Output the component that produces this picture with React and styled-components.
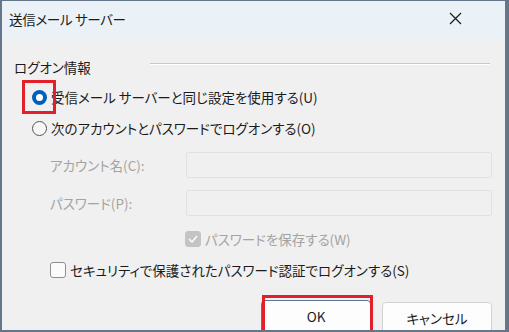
import React from "react";
import styled, { createGlobalStyle } from "styled-components";

const Global = createGlobalStyle`
  html, body { margin: 0; padding: 0; background: #f0f0f0; }
  body { font-family: "Noto Sans CJK JP", "Noto Sans", sans-serif; }
  * { box-sizing: border-box; }
`;

const Window = styled.div`
  position: relative;
  width: 509px;
  height: 332px;
  border-style: solid;
  border-color: #66768a;
  border-width: 1px 4px 2px 2px;
  display: flex;
  flex-direction: column;
  overflow: hidden;
  font-family: "Noto Sans CJK JP", "Noto Sans", sans-serif;
  font-feature-settings: "palt";
  font-size: 13.5px;
  color: #1b1b1b;
`;

const TitleBar = styled.div`
  height: 37px;
  flex: none;
  display: flex;
  align-items: center;
  justify-content: space-between;
  background: #eaf2f7;
  padding: 0 43px 0 7px;
`;

const Title = styled.span`
  font-size: 13.5px;
  letter-spacing: -0.3px;
  line-height: 20px;
  margin-top: -2px;
`;

const Close = styled.svg`
  width: 13px;
  height: 13px;
  margin-top: -2px;
`;

const Body = styled.div`
  flex: 1;
  background: #f0f0f0;
  display: flex;
  flex-direction: column;
  padding: 20px 13px 0 12px;
  overflow: hidden;
`;

const GroupHeader = styled.div`
  display: flex;
  align-items: flex-start;
  height: 18px;
  line-height: 18px;
`;

const GroupLine = styled.div`
  margin-left: auto;
  margin-right: 2px;
  margin-top: 5px;
  width: 340px;
  height: 2px;
  border-top: 1px solid #c9c9c9;
  border-bottom: 1px solid #ffffff;
`;

const Row = styled.div`
  display: flex;
  align-items: center;
  height: 20px;
  line-height: 20px;
  margin-top: ${(p) => p.$top}px;
  padding-left: ${(p) => p.$indent}px;
  color: ${(p) => (p.$disabled ? "#a3a3a3" : "#1b1b1b")};
`;

const Radio = styled.span`
  width: 15px;
  height: 15px;
  border-radius: 50%;
  flex: none;
  margin-right: 4px;
  display: flex;
  align-items: center;
  justify-content: center;
  background: ${(p) => (p.$checked ? "#005fb8" : "#f7f7f7")};
  border: ${(p) => (p.$checked ? "none" : "1px solid #555")};
  &::after {
    content: "";
    display: ${(p) => (p.$checked ? "block" : "none")};
    width: 7px;
    height: 7px;
    border-radius: 50%;
    background: #fff;
  }
`;

const Check = styled.span`
  width: 16px;
  height: 16px;
  border-radius: 3px;
  flex: none;
  margin-right: 4px;
  display: flex;
  align-items: center;
  justify-content: center;
  background: ${(p) => (p.$checked ? "#c4c4c4" : "#fbfbfb")};
  border: 1px solid ${(p) => (p.$checked ? "#c4c4c4" : "#8f8f8f")};
`;

const FieldRow = styled.div`
  display: flex;
  align-items: center;
  height: 26px;
  margin-top: ${(p) => p.$top}px;
  padding-left: 36px;
`;

const FieldLabel = styled.span`
  width: 136px;
  color: #a3a3a3;
  line-height: 20px;
`;

const Input = styled.div`
  flex: 1;
  height: 26px;
  background: #f0f0f0;
  border: 1px solid #e1e1e1;
  border-radius: 2px;
`;

const Buttons = styled.div`
  display: flex;
  justify-content: flex-end;
  gap: 11px;
  margin-top: 20px;
`;

const Button = styled.button`
  width: 110px;
  height: 34px;
  flex: none;
  font-family: inherit;
  font-feature-settings: "palt";
  font-size: 13.5px;
  color: #1b1b1b;
  background: #fdfdfd;
  border: 1px solid ${(p) => (p.$default ? "#5b7693" : "#d3d3d3")};
  border-radius: 4px;
  padding: 0 0 2px;
  margin-top: ${(p) => (p.$default ? 0 : 2)}px;
`;

const Highlight = styled.div`
  position: absolute;
  left: ${(p) => p.$x}px;
  top: ${(p) => p.$y}px;
  width: ${(p) => p.$w}px;
  height: ${(p) => p.$h}px;
  border: 3px solid #e3202a;
  pointer-events: none;
`;

export default function App() {
  return (
    <>
      <Global />
      <Window>
        <TitleBar>
          <Title>送信メール サーバー</Title>
          <Close viewBox="0 0 13 13">
            <path d="M1 1 L12 12 M12 1 L1 12" stroke="#1b1b1b" strokeWidth="1.2" fill="none" />
          </Close>
        </TitleBar>
        <Body>
          <GroupHeader>
            <span>ログオン情報</span>
            <GroupLine />
          </GroupHeader>
          <Row $top={11} $indent={18}>
            <Radio $checked />
            <span>受信メール サーバーと同じ設定を使用する(U)</span>
          </Row>
          <Row $top={11} $indent={18}>
            <Radio />
            <span>次のアカウントとパスワードでログオンする(O)</span>
          </Row>
          <FieldRow $top={14}>
            <FieldLabel>アカウント名(C):</FieldLabel>
            <Input />
          </FieldRow>
          <FieldRow $top={12}>
            <FieldLabel>パスワード(P):</FieldLabel>
            <Input />
          </FieldRow>
          <Row $top={13} $indent={171} $disabled>
            <Check $checked>
              <svg width="10" height="8" viewBox="0 0 10 8">
                <path d="M1 4 L4 7 L9 1" stroke="#fff" strokeWidth="1.4" fill="none" />
              </svg>
            </Check>
            <span>パスワードを保存する(W)</span>
          </Row>
          <Row $top={11} $indent={36}>
            <Check />
            <span>セキュリティで保護されたパスワード認証でログオンする(S)</span>
          </Row>
          <Buttons>
            <Button $default>OK</Button>
            <Button>キャンセル</Button>
          </Buttons>
        </Body>
        <Highlight $x={20} $y={79} $w={34} $h={34} />
        <Highlight $x={260} $y={294} $w={111} $h={40} />
      </Window>
    </>
  );
}
